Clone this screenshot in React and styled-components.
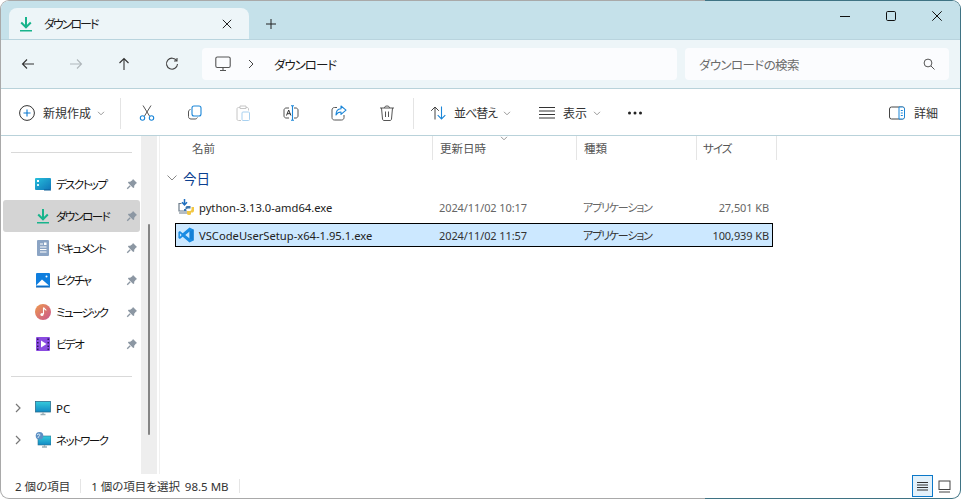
import React from "react";
import styled, { createGlobalStyle } from "styled-components";

const GlobalStyle = createGlobalStyle`
  html, body { margin: 0; padding: 0; background: #ffffff; }
  body {
    width: 961px;
    height: 499px;
    overflow: hidden;
    font-family: "Noto Sans", "Noto Sans CJK JP", sans-serif;
    font-size: 12px;
    font-feature-settings: "palt";
    color: #1a1a1a;
  }
  svg { display: block; }
`;

const Frame = styled.div`
  width: 961px;
  height: 499px;
  box-sizing: border-box;
  padding: 1px;
  border-radius: 9px;
  background: linear-gradient(to right, #a9a9a9 705px, #3f7384 705px);
`;

const Win = styled.div`
  height: 100%;
  display: flex;
  flex-direction: column;
  background: #fff;
  border-radius: 8px;
  overflow: hidden;
`;

const TitleBar = styled.div`
  flex: 0 0 38px;
  display: flex;
  align-items: flex-end;
  background: #c5e1ea;
  padding-left: 8px;
`;

const Tab = styled.div`
  width: 240px;
  height: 31px;
  box-sizing: border-box;
  padding: 0 17px 0 9px;
  display: flex;
  align-items: center;
  background: #edf5f8;
  border-radius: 8px 8px 0 0;
  gap: 10px;
`;

const TabTitle = styled.span`
  flex: 1;
  font-size: 12px;
  letter-spacing: -2px;
`;

const NewTab = styled.div`
  width: 44px;
  height: 31px;
  display: flex;
  align-items: center;
  justify-content: center;
`;

const Controls = styled.div`
  margin-left: auto;
  align-self: flex-start;
  display: flex;
`;

const Control = styled.div`
  width: 46px;
  height: 29px;
  display: flex;
  align-items: center;
  justify-content: center;
`;

const NavBar = styled.div`
  flex: 0 0 48px;
  display: flex;
  align-items: center;
  padding-left: 3px;
  background: #edf5f8;
  border-top: 1px solid #b9d4de;
  border-bottom: 1px solid #b9d2da;
`;

const NavButton = styled.div`
  width: 48px;
  height: 32px;
  display: flex;
  align-items: center;
  justify-content: center;
`;

const AddressBox = styled.div`
  width: 475px;
  height: 32px;
  box-sizing: border-box;
  margin-left: 6px;
  padding-left: 13px;
  display: flex;
  align-items: center;
  background: #fbfcfe;
  border-radius: 4px;
  font-size: 12.5px;
`;

const Crumb = styled.span`
  margin-left: 20px;
  letter-spacing: -1px;
`;

const CrumbArrow = styled.span`
  margin-left: 17px;
`;

const SearchBox = styled.div`
  width: 264px;
  height: 32px;
  box-sizing: border-box;
  margin-left: 8px;
  padding: 0 14px;
  display: flex;
  align-items: center;
  justify-content: space-between;
  background: #fbfcfe;
  border-radius: 4px;
  color: #6b6b6b;
  font-size: 12.5px;
  letter-spacing: -0.6px;
`;

const Toolbar = styled.div`
  flex: 0 0 47px;
  box-sizing: border-box;
  display: flex;
  align-items: center;
  padding: 2px 0 0 18px;
  border-bottom: 1px solid #b9d2da;
`;

const TextTool = styled.div`
  display: flex;
  align-items: center;
  gap: 8px;
  width: ${(p) => p.$w}px;
  padding-left: ${(p) => p.$pad || 0}px;
  box-sizing: border-box;
  color: #333;
  letter-spacing: ${(p) => p.$track || 0}px;
`;

const ChevronSlot = styled.div`
  margin-left: -2px;
`;

const Tool = styled.div`
  width: 48px;
  display: flex;
  justify-content: center;
`;

const ToolSep = styled.div`
  width: 1px;
  height: 31px;
  margin-right: 2px;
  background: #e4e4e4;
`;

const ToolSepWide = styled(ToolSep)`
  margin: 0 0 0 2px;
`;

const Details = styled.div`
  margin-left: auto;
  margin-right: 22px;
  display: flex;
  align-items: center;
  gap: 9px;
  color: #333;
`;

const Body = styled.div`
  flex: 1;
  min-height: 0;
  display: flex;
`;

const Sidebar = styled.div`
  width: 139px;
  box-sizing: border-box;
  padding: 16px 0 0 2px;
`;

const SideRule = styled.div`
  height: 1px;
  margin: 0 8px 15px 8px;
  background: #d9d9d9;
`;

const SideRow = styled.div`
  height: 32px;
  display: flex;
  align-items: center;
  box-sizing: border-box;
  border-radius: 3px;
  background: ${(p) => (p.$active ? "#d4d4d4" : "transparent")};
  color: #111;
`;

const SideIcon = styled.div`
  width: 24px;
  margin-left: ${(p) => (p.$nested ? 5 : 28)}px;
  display: flex;
  justify-content: center;
`;

const Expander = styled.div`
  width: 16px;
  margin-left: 7px;
  display: flex;
  justify-content: center;
`;

const SideLabel = styled.span`
  margin-left: 1px;
  flex: 1;
  white-space: nowrap;
  font-size: 11.5px;
  letter-spacing: ${(p) => (p.$latin ? 0 : -1.6)}px;
`;

const Pin = styled.div`
  margin-right: 2px;
`;

const GroupGap = styled.div`
  height: 16px;
`;

const ScrollTrack = styled.div`
  width: 16px;
  background: #eeeeee;
  margin-left: 1px;
  padding-top: 88px;
  box-sizing: border-box;
  display: flex;
  justify-content: center;
`;

const ScrollThumb = styled.div`
  width: 2px;
  height: 211px;
  background: #858585;
  border-radius: 1px;
`;

const Main = styled.div`
  flex: 1;
  margin-left: 2px;
  border-left: 1px solid #f0f0f0;
  position: relative;
`;

const Columns = styled.div`
  display: grid;
  grid-template-columns: 273px 144px 120px 80px;
  height: 24px;
`;

const HeadCell = styled.div`
  padding-left: ${(p) => p.$pad}px;
  display: flex;
  align-items: center;
  border-right: 1px solid #e5e5e5;
  color: #555;
  font-size: 11.5px;
  letter-spacing: ${(p) => p.$track || 0}px;
`;

const SortMark = styled.div`
  position: absolute;
  left: 340px;
  top: 0;
`;

const GroupHead = styled.div`
  height: 35px;
  margin-left: 7px;
  display: flex;
  align-items: center;
  gap: 6px;
  color: #0b3f8f;
  font-size: 13.5px;
`;

const FileRow = styled.div`
  width: 598px;
  height: 24px;
  box-sizing: border-box;
  margin: 0 0 4px 15px;
  display: grid;
  grid-template-columns: 263px 144px 120px 66px;
  align-items: center;
  border: 1px solid ${(p) => (p.$selected ? "#000" : "transparent")};
  background: ${(p) => (p.$selected ? "#cce8ff" : "transparent")};
  color: ${(p) => (p.$selected ? "#333" : "#666")};
`;

const NameCell = styled.div`
  display: flex;
  align-items: center;
  padding-left: 2px;
  gap: 5px;
  color: #222;
  font-size: 11.2px;
`;

const MetaCell = styled.div`
  font-size: 11px;
  text-align: ${(p) => (p.$right ? "right" : "left")};
  letter-spacing: ${(p) => p.$track ?? -0.1}px;
`;

const StatusBar = styled.div`
  flex: 0 0 24px;
  display: flex;
  align-items: center;
  padding-left: 14px;
  color: #333;
  font-size: 11.5px;
`;

const StatusSep = styled.div`
  width: 1px;
  height: 14px;
  margin: 0 10px;
  background: #e5e5e5;
`;

const ViewGroup = styled.div`
  margin-left: auto;
  margin-right: 5px;
  display: flex;
  gap: 1px;
`;

const ViewButton = styled.div`
  width: 21px;
  height: 22px;
  box-sizing: border-box;
  display: flex;
  align-items: center;
  justify-content: center;
  border: 1px solid ${(p) => (p.$on ? "#0b78c9" : "transparent")};
  background: ${(p) => (p.$on ? "#e3f1fa" : "transparent")};
`;

const Ico = ({ s = 16, w, h, children, ...rest }) => (
  <svg width={w || s} height={h || s} viewBox={`0 0 ${w || s} ${h || s}`} fill="none" {...rest}>
    {children}
  </svg>
);

const DownloadIcon = () => (
  <Ico>
    <path d="M8 1v10M3.200 6.500 8 11.300l4.800-4.800" stroke="#18b48c" strokeWidth="2" />
    <path d="M2 14.800h12" stroke="#18b48c" strokeWidth="1.500" />
  </Ico>
);

const Chevron = ({ color = "#999" }) => (
  <Ico w={8} h={5}>
    <path d="M1 .8 4 3.800 7 .8" stroke={color} strokeWidth="1" />
  </Ico>
);

const Arrow = ({ d, color = "#333" }) => (
  <Ico>
    <path d={d} stroke={color} strokeWidth="1.100" />
  </Ico>
);

const PinIcon = () => (
  <Ico s={12}>
    <path d="M7 1 11 5 9.800 5.700 8.200 7.800 8.200 9.600 7.200 10 2 4.800 2.400 3.800 4.200 3.800 6.300 2.200Z" fill="#8c97a3" />
    <path d="M4.200 7.800 1.200 10.800" stroke="#8c97a3" strokeWidth="1.300" />
  </Ico>
);

const DesktopIcon = () => (
  <Ico>
    <defs>
      <linearGradient id="desk" x1="0" y1="0" x2="1" y2="1">
        <stop offset="0" stopColor="#27c0dc" />
        <stop offset="1" stopColor="#0f74b8" />
      </linearGradient>
    </defs>
    <rect x="0" y="2" width="16" height="12" rx="1" fill="url(#desk)" />
    <rect x="2" y="4" width="2" height="2" fill="#fff" />
    <rect x="2" y="8" width="2" height="2" fill="#d5f2fa" />
    <path d="M9 14h7" stroke="#0b5d96" strokeWidth="1" />
  </Ico>
);

const DocIcon = () => (
  <Ico>
    <rect x="2" y="0" width="12" height="16" rx="1" fill="#8ba4c4" />
    <path d="M5 4h3M5 7h6.500M5 9.500h6.500M5 12h6.500" stroke="#fff" strokeWidth="1" />
    <rect x="9" y="2.500" width="2.500" height="2.500" fill="#fff" />
  </Ico>
);

const PictureIcon = () => (
  <Ico>
    <rect x="1" y="1" width="14" height="14" rx="1" fill="#0f7ede" />
    <path d="M1 13.500 7 7.500l7 6Z" fill="#fff" />
    <path d="M1 15h14" stroke="#0a5fb0" strokeWidth="1" />
    <circle cx="11.500" cy="4.500" r="1" fill="#fff" />
  </Ico>
);

const MusicIcon = () => (
  <Ico>
    <defs>
      <linearGradient id="mus" x1="0" y1="0" x2="1" y2="1">
        <stop offset="0" stopColor="#ee9a4d" />
        <stop offset="1" stopColor="#c9558f" />
      </linearGradient>
    </defs>
    <circle cx="8" cy="8" r="8" fill="url(#mus)" />
    <path d="M8.500 3.500v6.500M8.500 3.500c.5 1.600 2.300 1.400 2.600 3" stroke="#fff" strokeWidth="1.100" />
    <circle cx="7" cy="10.500" r="1.600" fill="#fff" />
  </Ico>
);

const VideoIcon = () => (
  <Ico>
    <rect x="1" y="1" width="14" height="14" rx="1" fill="#8a4be0" />
    <path d="M6 4.500v7l5.500-3.500Z" fill="#fff" />
    <path d="M2.800 2.500v1.500M2.800 6v1.500M2.800 9.500V11M2.800 12.500V14M13.200 2.500v1.500M13.200 6v1.500M13.200 9.500V11M13.200 12.500V14" stroke="#1c1040" strokeWidth="1.300" />
  </Ico>
);

const PcIcon = () => (
  <Ico>
    <defs>
      <linearGradient id="pc" x1="0" y1="0" x2="0" y2="1">
        <stop offset="0" stopColor="#35cbdc" />
        <stop offset="1" stopColor="#1189c4" />
      </linearGradient>
    </defs>
    <rect x=".5" y="1.500" width="15" height="10.500" fill="url(#pc)" stroke="#2a6f8e" strokeWidth=".8" />
    <path d="M5.500 14.500h5M8 12v2.500" stroke="#9aaeb6" strokeWidth="1.300" />
  </Ico>
);

const NetworkIcon = () => (
  <Ico>
    <rect x="3" y="4" width="13" height="9" fill="url(#pc)" stroke="#2a6f8e" strokeWidth=".6" />
    <path d="M7 15h5M9.500 13v2" stroke="#9aaeb6" strokeWidth="1.300" />
    <circle cx="4.500" cy="3.800" r="3.800" fill="#5d8fc4" />
    <path d="M2 3c1.400-1.600 3-1 3 0s-2 1-2 3" stroke="#d9ecf5" strokeWidth="1" />
  </Ico>
);

const PythonIcon = () => (
  <Ico>
    <path d="M3.500 4.500H1v7.500h8M1 14h8" stroke="#6a7a88" strokeWidth="1.200" />
    <path d="M6.500 0v5M4 3.200 6.500 5.800 9 3.200" stroke="#1f6fc0" strokeWidth="1.500" />
    <path d="M8 12c-.2-1.800 1-2.500 2-2.500h2.500V7H9c-1 .2-1.500 1-1.500 1.800V10H6v2Z" fill="#3f77ad" />
    <path d="M9 12h3c1 0 1.500-.8 1.500-2V8H16v3.500c0 1.500-1 2-1.700 2H13V15c0 .8-1 1-2.500 1-1.200 0-1.500-.8-1.500-1.500Z" fill="#f2c744" />
  </Ico>
);

const VSCodeIcon = () => (
  <Ico>
    <path
      fillRule="evenodd"
      d="M11.500.6 15.600 2.600v10.800l-4.100 2L4.700 9.700 1.900 11.900.4 11V5l1.500-.9L4.700 6.300ZM11.600 4.600 7.300 8l4.300 3.400ZM1.900 6.200v3.600L3.700 8Z"
      fill="#1b8ce3"
    />
    <path d="M11.600 4.600v6.800L15.600 13.400V2.600Z" fill="#1480d6" />
  </Ico>
);

const sidePinned = [
  ["デスクトップ", <DesktopIcon />],
  ["ダウンロード", <DownloadIcon />, true],
  ["ドキュメント", <DocIcon />],
  ["ピクチャ", <PictureIcon />],
  ["ミュージック", <MusicIcon />],
  ["ビデオ", <VideoIcon />],
];

const files = [
  { name: "python-3.13.0-amd64.exe", date: "2024/11/02 10:17", size: "27,501 KB", icon: <PythonIcon /> },
  { name: "VSCodeUserSetup-x64-1.95.1.exe", date: "2024/11/02 11:57", size: "100,939 KB", icon: <VSCodeIcon />, selected: true },
];

export default function App() {
  return (
    <>
      <GlobalStyle />
      <Frame>
        <Win>
          <TitleBar>
            <Tab>
              <DownloadIcon />
              <TabTitle>ダウンロード</TabTitle>
              <Ico s={10}><path d="M.8.8l8.400 8.400M9.200.8.8 9.200" stroke="#222" strokeWidth="1" /></Ico>
            </Tab>
            <NewTab>
              <Ico s={10}><path d="M5 0v10M0 5h10" stroke="#222" strokeWidth="1" /></Ico>
            </NewTab>
            <Controls>
              <Control><Ico s={10}><path d="M0 5.500h10" stroke="#111" strokeWidth="1" /></Ico></Control>
              <Control><Ico s={10}><rect x=".5" y=".5" width="9" height="9" rx="1.200" stroke="#111" /></Ico></Control>
              <Control><Ico s={10}><path d="M.3.3l9.400 9.400M9.700.3.3 9.700" stroke="#111" strokeWidth="1" /></Ico></Control>
            </Controls>
          </TitleBar>

          <NavBar>
            <NavButton><Arrow d="M14 8H2.500M7 3.500 2.500 8 7 12.500" /></NavButton>
            <NavButton><Arrow d="M2 8h11.500M9 3.500 13.500 8 9 12.500" color="#b0b7bb" /></NavButton>
            <NavButton><Arrow d="M8 14V2.500M3.500 7 8 2.500 12.500 7" /></NavButton>
            <NavButton><Arrow d="M12.700 4.800A5.500 5.500 0 1 0 13.500 8M13 2v3h-3" color="#444" /></NavButton>
            <AddressBox>
              <Ico>
                <rect x=".8" y="1" width="14.400" height="10.500" rx="1.600" stroke="#555" strokeWidth="1.100" />
                <path d="M5 14.500h6M8 11.500v3" stroke="#555" strokeWidth="1.100" />
              </Ico>
              <CrumbArrow>
                <Ico w={6} h={10}><path d="M1 1l4 4-4 4" stroke="#444" strokeWidth="1" /></Ico>
              </CrumbArrow>
              <Crumb>ダウンロード</Crumb>
            </AddressBox>
            <SearchBox>
              ダウンロードの検索
              <Ico s={12}><circle cx="5" cy="5" r="3.900" stroke="#555" /><path d="M8 8l3.500 3.500" stroke="#555" /></Ico>
            </SearchBox>
          </NavBar>

          <Toolbar>
            <TextTool $w={101}>
              <Ico>
                <circle cx="8" cy="8" r="7.400" stroke="#333" strokeWidth="1" />
                <path d="M8 4.500v7M4.500 8h7" stroke="#0b78d0" strokeWidth="1.100" />
              </Ico>
              新規作成
              <ChevronSlot><Chevron /></ChevronSlot>
            </TextTool>
            <ToolSep />
            <Tool>
              <Ico><path d="M4 .5l6.500 10.500M12 .5 5.500 11" stroke="#555" /><circle cx="3.500" cy="13" r="2.200" stroke="#1b86d8" strokeWidth="1.100" /><circle cx="12.500" cy="13" r="2.200" stroke="#1b86d8" strokeWidth="1.100" /></Ico>
            </Tool>
            <Tool>
              <Ico><rect x="5" y="1" width="9" height="10" rx="2" stroke="#1b86d8" strokeWidth="1.100" /><path d="M3.500 4.500C2 5 1.500 5.500 1.500 7v4.500c0 1.500 1 2.500 2.500 2.500h4c1.300 0 2-.6 2.400-1.500" stroke="#555" strokeWidth="1" /></Ico>
            </Tool>
            <Tool>
              <Ico><path d="M5 2.500H3.500C2.500 2.500 2 3 2 4v10c0 1 .5 1.500 1.500 1.500H6M11 2.500h1c1 0 1.500.5 1.500 1.500v1.500M5 1h6v2.500H5Z" stroke="#c6c6c6" /><rect x="7" y="7" width="7.500" height="8.500" rx="1" stroke="#a8d1f0" /></Ico>
            </Tool>
            <Tool>
              <Ico><path d="M6 3H3C2 3 1 4 1 5v6c0 1 1 2 2 2h3M11 3h2c1 0 2 1 2 2v6c0 1-1 2-2 2h-2" stroke="#555" /><path d="M3.500 10.500 5.700 5l2.200 5.500M4.300 8.700h2.900" stroke="#333" /><path d="M9.500.8v14.400M8 .8h3M8 15.200h3" stroke="#1b86d8" strokeWidth="1.100" /></Ico>
            </Tool>
            <Tool>
              <Ico><path d="M6 2.500H3.500C2 2.500 1 3.500 1 5v7.500C1 14 2 15 3.500 15h7c1.500 0 2.500-1 2.500-2.500V10" stroke="#555" /><path d="M10 1l5 4.200-5 4.200V7c-2.500 0-4 1-5 3 0-4 2-6 5-6.200Z" stroke="#1b86d8" strokeWidth="1.100" strokeLinejoin="round" /></Ico>
            </Tool>
            <Tool>
              <Ico><path d="M1 3h14M5.500 3c0-1.500 1-2 2.500-2s2.500.5 2.500 2M2.500 3l1 11c.1 1 .7 1.500 1.500 1.500h6c.8 0 1.400-.5 1.500-1.500l1-11M6.500 6.500v5.500M9.500 6.500v5.500" stroke="#555" strokeWidth="1" /></Ico>
            </Tool>
            <ToolSepWide />
            <TextTool $w={109} $pad={16} $track={-1}>
              <Ico><path d="M5 14.500V2M1.200 5.800 5 2l3.800 3.800" stroke="#444" /><path d="M11.500 1.500V14M7.700 10.200l3.800 3.800 3.800-3.800" stroke="#1b86d8" strokeWidth="1.100" /></Ico>
              並べ替え
              <ChevronSlot><Chevron /></ChevronSlot>
            </TextTool>
            <TextTool $w={88} $pad={16}>
              <Ico><path d="M0 2.500h16M0 6h16M0 9.500h16M0 13h16" stroke="#333" strokeWidth="1" /></Ico>
              表示
              <ChevronSlot><Chevron /></ChevronSlot>
            </TextTool>
            <Tool>
              <Ico><circle cx="2.500" cy="8" r="1.500" fill="#222" /><circle cx="8" cy="8" r="1.500" fill="#222" /><circle cx="13.500" cy="8" r="1.500" fill="#222" /></Ico>
            </Tool>
            <Details>
              <Ico w={16} h={14}><rect x=".5" y="1" width="15" height="12" rx="2" stroke="#444" /><path d="M10 1h3.500c1 0 2 1 2 2v8c0 1-1 2-2 2H10Z" fill="#fff" stroke="#1b86d8" /><path d="M11.800 4.500h2M11.800 7h2M11.800 9.500h2" stroke="#1b86d8" /></Ico>
              詳細
            </Details>
          </Toolbar>

          <Body>
            <Sidebar>
              <SideRule />
              {sidePinned.map(([label, icon, active]) => (
                <SideRow key={label} $active={active}>
                  <SideIcon>{icon}</SideIcon>
                  <SideLabel>{label}</SideLabel>
                  <Pin><PinIcon /></Pin>
                </SideRow>
              ))}
              <GroupGap />
              <SideRule />
              {[["PC", <PcIcon />, true], ["ネットワーク", <NetworkIcon />, false]].map(([label, icon, latin]) => (
                <SideRow key={label}>
                  <Expander>
                    <Ico w={6} h={10}><path d="M1 1l4 4-4 4" stroke="#777" strokeWidth="1.200" /></Ico>
                  </Expander>
                  <SideIcon $nested>{icon}</SideIcon>
                  <SideLabel $latin={latin}>{label}</SideLabel>
                </SideRow>
              ))}
            </Sidebar>
            <ScrollTrack><ScrollThumb /></ScrollTrack>
            <Main>
              <Columns>
                <HeadCell $pad={32}>名前</HeadCell>
                <HeadCell $pad={7}>更新日時</HeadCell>
                <HeadCell $pad={7}>種類</HeadCell>
                <HeadCell $pad={6} $track={-1}>サイズ</HeadCell>
              </Columns>
              <SortMark><Chevron /></SortMark>
              <GroupHead>
                <Ico w={10} h={6}><path d="M.5.5 5 5 9.500.5" stroke="#888" /></Ico>
                今日
              </GroupHead>
              {files.map((f) => (
                <FileRow key={f.name} $selected={f.selected}>
                  <NameCell>{f.icon}{f.name}</NameCell>
                  <MetaCell>{f.date}</MetaCell>
                  <MetaCell $track={-1.2}>アプリケーション</MetaCell>
                  <MetaCell $right>{f.size}</MetaCell>
                </FileRow>
              ))}
            </Main>
          </Body>

          <StatusBar>
            2 個の項目
            <StatusSep />
            1 個の項目を選択&nbsp;&thinsp;98.5 MB
            <StatusSep />
            <ViewGroup>
              <ViewButton $on>
                <Ico s={13}><path d="M1 2.500h11M1 5h11M1 7.500h11M1 10h11" stroke="#333" /></Ico>
              </ViewButton>
              <ViewButton>
                <Ico s={13}><rect x="1" y="1" width="11" height="8.500" stroke="#444" /><path d="M1 12h11" stroke="#444" /></Ico>
              </ViewButton>
            </ViewGroup>
          </StatusBar>
        </Win>
      </Frame>
    </>
  );
}
